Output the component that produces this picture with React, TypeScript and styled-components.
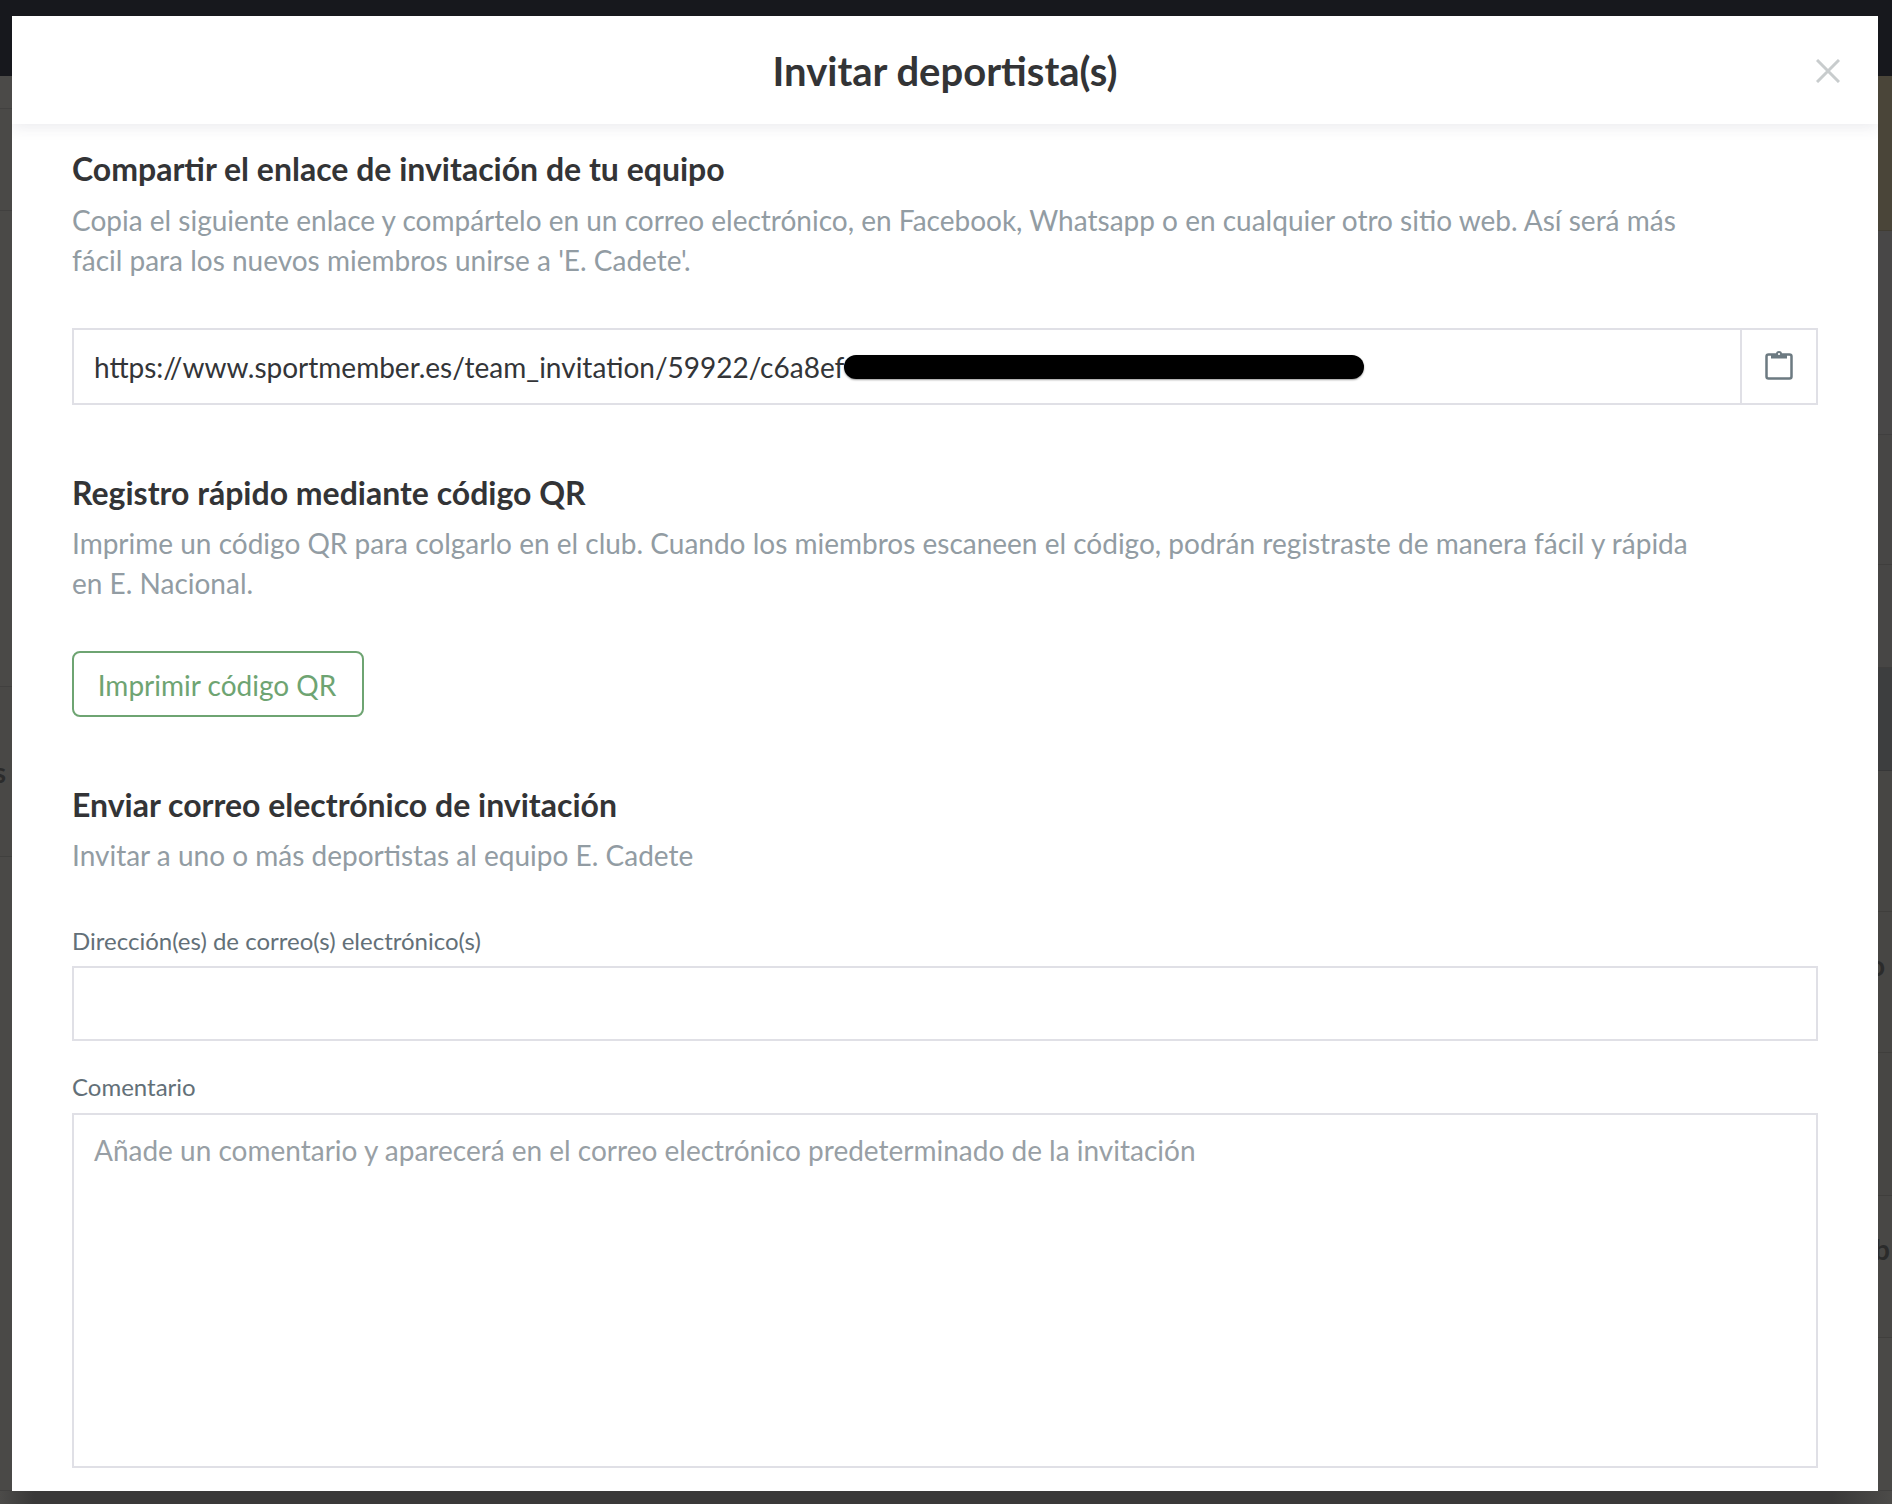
import styled, { createGlobalStyle } from 'styled-components';

const GlobalStyle = createGlobalStyle`
  html, body {
    margin: 0;
    padding: 0;
    background: #3a3939;
  }
  * {
    box-sizing: border-box;
  }
`;

const Page = styled.div`
  position: relative;
  width: 1892px;
  height: 1504px;
  overflow: hidden;
  display: flex;
  flex-direction: column;
  font-family: Lato, 'Liberation Sans', sans-serif;
`;

const TopBar = styled.div`
  height: 76px;
  flex: none;
  background: #17181d;
`;

const DimmedPage = styled.div`
  flex: 1;
  display: flex;
  justify-content: space-between;
`;

const EdgeColumn = styled.div<{ $width: number }>`
  width: ${({ $width }) => $width}px;
  display: flex;
  flex-direction: column;
`;

const Band = styled.div<{ $height: number; $bg: string; $pad?: number; $lift?: number }>`
  height: ${({ $height }) => $height}px;
  background: ${({ $bg }) => $bg};
  border-bottom: 1px solid rgba(30, 30, 30, 0.18);
  display: flex;
  align-items: center;
  justify-content: flex-end;
  overflow: hidden;
  padding-right: ${({ $pad }) => $pad ?? 0}px;
  padding-bottom: ${({ $lift }) => $lift ?? 0}px;
  color: #2b2b2b;
  font-size: 28px;
  font-weight: 700;
`;

const BottomBar = styled.div`
  height: 13px;
  flex: none;
  background: linear-gradient(to right, #4c4b49 0, #3a3939 34px, #3a3939 calc(100% - 60px), #4c4b49 100%);
`;

const Modal = styled.div`
  position: absolute;
  left: 12px;
  top: 16px;
  width: 1866px;
  height: 1475px;
  background: #fff;
  overflow: hidden;
`;

const ModalHeader = styled.header`
  position: relative;
  height: 108px;
  padding-top: 2px;
  display: flex;
  align-items: center;
  justify-content: center;
  background: #fff;
  box-shadow: 0 3px 14px rgba(60, 60, 90, 0.1);
`;

const Title = styled.h1`
  margin: 0;
  font-size: 40px;
  font-weight: 700;
  color: #333436;
`;

const CloseButton = styled.button`
  position: absolute;
  right: 38px;
  top: 43px;
  width: 24px;
  height: 24px;
  padding: 0;
  border: 0;
  background: none;
  display: flex;
`;

const ModalBody = styled.div`
  padding: 25px 60px 0;
`;

const SectionTitle = styled.h2<{ $top?: number; $gap?: number }>`
  margin: ${({ $top }) => $top ?? 0}px 0 ${({ $gap }) => $gap ?? 10}px;
  font-size: 32px;
  line-height: 40px;
  font-weight: 700;
  color: #333436;
`;

const Description = styled.p`
  margin: 0;
  max-width: 1630px;
  font-size: 28px;
  line-height: 40px;
  color: #929ca3;
`;

const LinkField = styled.div`
  margin-top: 48px;
  height: 77px;
  display: flex;
  border: 2px solid #e0e0e6;
`;

const LinkText = styled.div`
  flex: 1;
  display: flex;
  align-items: center;
  padding-left: 20px;
  font-size: 28px;
  color: #333538;
`;

const Redaction = styled.span`
  width: 520px;
  height: 24px;
  border-radius: 12px;
  background: #000;
  box-shadow: 0 1px 2px rgba(0, 0, 0, 0.4);
`;

const CopyButton = styled.button`
  width: 76px;
  border: 0;
  border-left: 2px solid #e0e0e6;
  background: none;
  padding: 0 0 3px;
  display: flex;
  align-items: center;
  justify-content: center;
`;

const OutlineButton = styled.button`
  display: block;
  margin-top: 48px;
  width: 292px;
  height: 66px;
  padding: 1px 2px 0 0;
  border: 2px solid #6ea472;
  border-radius: 8px;
  background: #fff;
  font-family: inherit;
  font-size: 28px;
  color: #6ea472;
`;

const FieldLabel = styled.label<{ $top: number; $gap: number }>`
  display: block;
  margin-top: ${({ $top }) => $top}px;
  margin-bottom: ${({ $gap }) => $gap}px;
  font-size: 24px;
  line-height: 32px;
  color: #637078;
`;

const TextInput = styled.input`
  display: block;
  width: 100%;
  height: 75px;
  border: 2px solid #e0e0e6;
  border-radius: 0;
  outline: none;
  background: #fff;
`;

const CommentArea = styled.textarea`
  display: block;
  width: 100%;
  height: 355px;
  padding: 15px 20px;
  border: 2px solid #e0e0e6;
  border-radius: 0;
  outline: none;
  resize: none;
  background: #fff;
  font-family: inherit;
  font-size: 28px;
  line-height: 40px;

  &::placeholder {
    color: #989fa5;
    opacity: 1;
  }
`;

const leftBands = [
  { height: 33, bg: '#4b4a48' },
  { height: 102, bg: '#4a4947' },
  { height: 476, bg: '#4a4947' },
  { height: 170, bg: '#494846', text: 's', pad: 6 },
  { height: 634, bg: '#4a4947' },
];

const rightBands = [
  { height: 155, bg: '#4a4539' },
  { height: 204, bg: '#484747' },
  { height: 130, bg: '#474645' },
  { height: 103, bg: '#474645' },
  { height: 103, bg: '#3d3e3f' },
  { height: 141, bg: '#474644' },
  { height: 141, bg: '#474644', text: 'o', pad: 7, lift: 34 },
  { height: 143, bg: '#474644' },
  { height: 142, bg: '#484745', text: 'b', pad: 2, lift: 36 },
  { height: 153, bg: '#4a4947' },
];

const CloseIcon = () => (
  <svg width="24" height="24" viewBox="0 0 24 24" fill="none" stroke="#c8cccd" strokeWidth="3">
    <path d="M1 1 L23 23 M23 1 L1 23" />
  </svg>
);

const ClipboardIcon = () => (
  <svg width="28" height="30" viewBox="0 0 28 30" fill="none">
    <rect x="1.5" y="4.5" width="25" height="24" rx="2" stroke="#6c7a81" strokeWidth="2.5" />
    <path d="M6 4 h5 a3 3 0 0 1 6 0 h5 v4.5 h-16 z" fill="#6c7a81" />
    <circle cx="14" cy="4" r="1.1" fill="#fff" />
  </svg>
);

export default function App() {
  return (
    <Page>
      <GlobalStyle />
      <TopBar />
      <DimmedPage>
        <EdgeColumn $width={12}>
          {leftBands.map((band, i) => (
            <Band key={i} $height={band.height} $bg={band.bg} $pad={band.pad}>
              {band.text}
            </Band>
          ))}
        </EdgeColumn>
        <EdgeColumn $width={14}>
          {rightBands.map((band, i) => (
            <Band key={i} $height={band.height} $bg={band.bg} $pad={band.pad} $lift={band.lift}>
              {band.text}
            </Band>
          ))}
        </EdgeColumn>
      </DimmedPage>
      <BottomBar />

      <Modal>
        <ModalHeader>
          <Title>Invitar deportista(s)</Title>
          <CloseButton aria-label="Cerrar">
            <CloseIcon />
          </CloseButton>
        </ModalHeader>
        <ModalBody>
          <SectionTitle $gap={11}>Compartir el enlace de invitación de tu equipo</SectionTitle>
          <Description>
            Copia el siguiente enlace y compártelo en un correo electrónico, en Facebook, Whatsapp o en cualquier otro
            sitio web. Así será más fácil para los nuevos miembros unirse a 'E. Cadete'.
          </Description>
          <LinkField>
            <LinkText>
              https://www.sportmember.es/team_invitation/59922/c6a8ef
              <Redaction />
            </LinkText>
            <CopyButton aria-label="Copiar">
              <ClipboardIcon />
            </CopyButton>
          </LinkField>

          <SectionTitle $top={68}>Registro rápido mediante código QR</SectionTitle>
          <Description>
            Imprime un código QR para colgarlo en el club. Cuando los miembros escaneen el código, podrán registraste de
            manera fácil y rápida en E. Nacional.
          </Description>
          <OutlineButton>Imprimir código QR</OutlineButton>

          <SectionTitle $top={68}>Enviar correo electrónico de invitación</SectionTitle>
          <Description>Invitar a uno o más deportistas al equipo E. Cadete</Description>

          <FieldLabel $top={50} $gap={9}>Dirección(es) de correo(s) electrónico(s)</FieldLabel>
          <TextInput />
          <FieldLabel $top={30} $gap={10}>Comentario</FieldLabel>
          <CommentArea placeholder="Añade un comentario y aparecerá en el correo electrónico predeterminado de la invitación" />
        </ModalBody>
      </Modal>
    </Page>
  );
}
